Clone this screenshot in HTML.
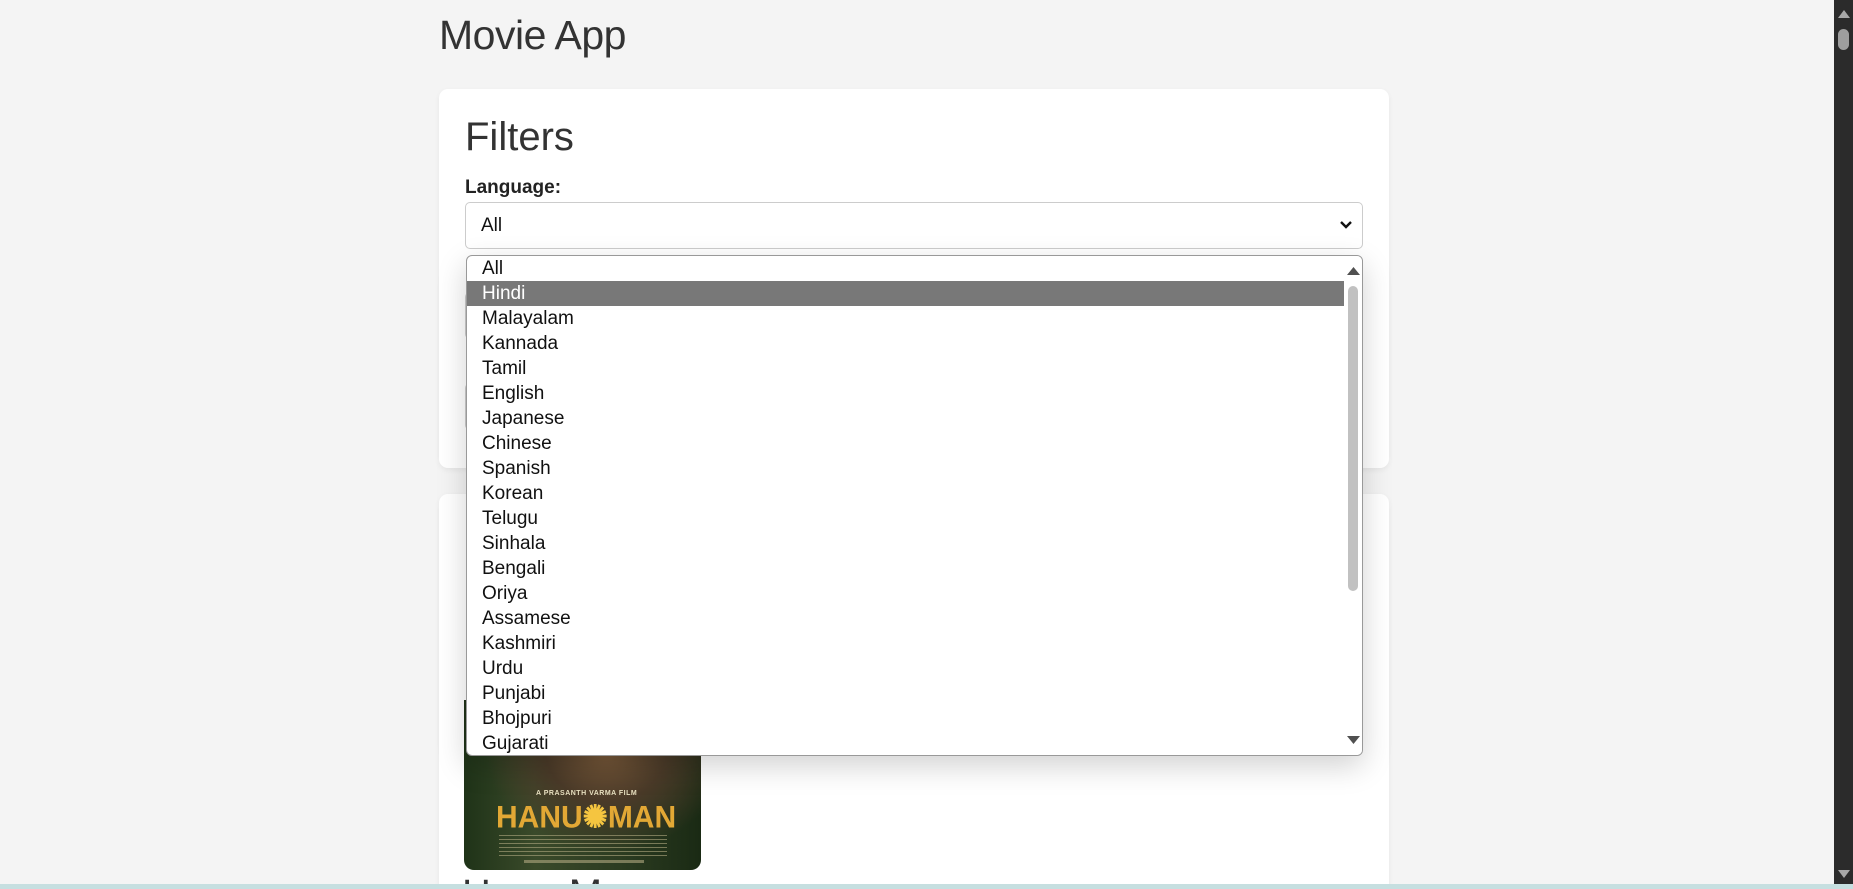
<!DOCTYPE html>
<html><head><meta charset="utf-8">
<style>
*{box-sizing:border-box;margin:0;padding:0}
html,body{width:1853px;height:889px;overflow:hidden;background:#f4f4f4;font-family:"Liberation Sans",Arial,sans-serif;color:#333;position:relative}
.abs{position:absolute}
h1{position:absolute;left:439px;top:12px;font-size:41px;font-weight:normal;color:#333;letter-spacing:-0.5px}
.card{position:absolute;left:439px;width:950px;background:#fff;border-radius:9px;box-shadow:0 2px 6px rgba(0,0,0,0.06)}
.sel{position:absolute;left:465px;width:898px;height:47px;border:1px solid #ccc;border-radius:5px;background:#fff}
.dd{position:absolute;left:466px;top:255px;width:897px;height:501px;background:#fff;border:1px solid #999;border-radius:6px;box-shadow:0 10px 30px rgba(0,0,0,0.18);overflow:hidden}
.dd div{height:25px;line-height:25px;padding-left:15px;font-size:19px;color:#111}
.dd div.hl{background:#787878;color:#fff}
</style></head><body>
<h1>Movie App</h1>
<div class="card" style="top:89px;height:379px"></div>
<div class="abs" style="left:465px;top:115px;font-size:40px;color:#333">Filters</div>
<div class="abs" style="left:465px;top:177px;font-size:19px;font-weight:bold;color:#222">Language:</div>
<div class="sel" style="top:202px"><span class="abs" style="left:15px;top:12px;font-size:19px;color:#111">All</span>
<svg class="abs" style="right:9px;top:17px" width="14" height="10" viewBox="0 0 14 10"><path d="M2 2 L7 7 L12 2" stroke="#111" stroke-width="2.4" fill="none"/></svg></div>
<div class="sel" style="top:292px"></div>
<div class="sel" style="top:383px"></div>
<div class="card" style="top:494px;height:420px"></div>
<div class="abs" style="left:464px;top:700px;width:237px;height:170px;border-radius:0 0 10px 10px;background:radial-gradient(ellipse at 60% 30%,#7a5a3a 0%,#4a3a28 30%,transparent 60%),linear-gradient(90deg,#1f3318 0%,#3a4a2a 30%,#2a3a20 70%,#1a2a14 100%);overflow:hidden">
<div class="abs" style="left:72px;top:90px;font-size:7px;font-weight:bold;color:#e8e0c0;letter-spacing:.5px">A PRASANTH VARMA FILM</div>
<div class="abs" style="left:32px;top:100px;font-size:30px;font-weight:bold;color:#e2a835;letter-spacing:0px;transform:scaleY(1.05)">HANU<span style="color:#f5c540">✺</span>MAN</div>
<div class="abs" style="left:35px;top:135px;width:168px;height:24px;background:repeating-linear-gradient(180deg,#b0a880 0 1px,transparent 1px 4px);opacity:.6"></div>
<div class="abs" style="left:60px;top:160px;width:120px;height:3px;background:#b0a880;opacity:.6"></div>
</div>
<div class="abs" style="left:462px;top:872px;font-size:40px;color:#333">Hanu Man</div>
<div class="dd">
<div>All</div><div class="hl">Hindi</div><div>Malayalam</div><div>Kannada</div><div>Tamil</div><div>English</div><div>Japanese</div><div>Chinese</div><div>Spanish</div><div>Korean</div><div>Telugu</div><div>Sinhala</div><div>Bengali</div><div>Oriya</div><div>Assamese</div><div>Kashmiri</div><div>Urdu</div><div>Punjabi</div><div>Bhojpuri</div><div>Gujarati</div>
<div class="abs" style="left:877px;top:0;width:19px;height:501px;background:#fff;padding:0"></div>
<svg class="abs" style="left:880px;top:10px" width="13" height="9"><path d="M0 9 L6.5 1 L13 9Z" fill="#505050"/></svg>
<div class="abs" style="left:881px;top:30px;width:10px;height:305px;background:#c1c1c1;border-radius:5px;padding:0"></div>
<svg class="abs" style="left:880px;top:480px" width="13" height="9"><path d="M0 0 L6.5 8 L13 0Z" fill="#505050"/></svg>
</div>
<div class="abs" style="left:1834px;top:0;width:19px;height:889px;background:#2b2b2b"></div>
<svg class="abs" style="left:1838px;top:9px" width="12" height="9"><path d="M0 9 L6 1 L12 9Z" fill="#a8a8a8"/></svg>
<div class="abs" style="left:1838px;top:29px;width:11px;height:21px;background:#9e9e9e;border-radius:6px"></div>
<svg class="abs" style="left:1838px;top:870px" width="12" height="9"><path d="M0 0 L6 8 L12 0Z" fill="#a8a8a8"/></svg>
<div class="abs" style="left:0;top:884px;width:1853px;height:5px;background:#c6dfe0"></div>
</body></html>
